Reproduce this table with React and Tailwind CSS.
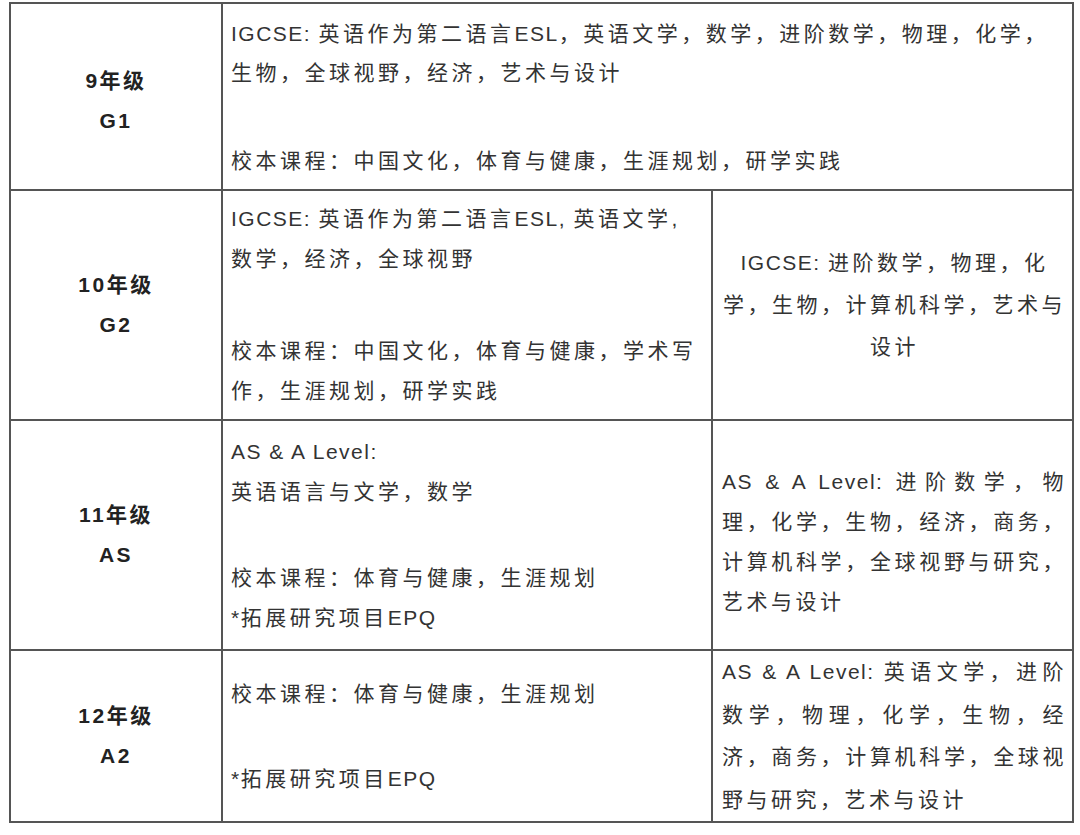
import React from "react";

// Latin runs are set a little tighter than the CJK text around them
function T({ children }) {
  const parts = String(children).split(/([A-Za-z0-9&*:,. ]+)/);
  return parts.map((p, i) =>
    /[A-Za-z0-9&*:,]/.test(p) ? (
      <span key={i} className="tracking-[1.5px]">{p}</span>
    ) : (
      <React.Fragment key={i}>{p}</React.Fragment>
    )
  );
}

function GradeCell({ grade, code, extra = "" }) {
  return (
    <div className={"bg-white flex flex-col items-center justify-center font-bold text-[#222] tracking-[2.5px] leading-[40px] " + extra}>
      <div>{grade}</div>
      <div>{code}</div>
    </div>
  );
}

export default function App() {
  return (
    <div className="w-[1080px] h-[835px] bg-white pt-[2px] pl-[9px] [font-family:'Liberation_Sans','Noto_Sans_CJK_SC',sans-serif] text-[21px] tracking-[3.5px] text-[#333]">
      <div className="grid grid-cols-[210px_488px_359px] grid-rows-[185px_228px_228px_170px] gap-[2px] p-[2px] bg-[#555] w-[1065px]">
        {/* row 1 */}
        <GradeCell grade="9年级" code="G1" extra="pt-[8px]" />
        <div className="col-span-2 bg-white flex flex-col justify-center pl-[8px] pr-[6px] leading-[39px]">
          <p><T>IGCSE: 英语作为第二语言ESL，英语文学，数学，进阶数学，物理，化学，生物，全球视野，经济，艺术与设计</T></p>
          <p className="mt-[49px]">校本课程：中国文化，体育与健康，生涯规划，研学实践</p>
        </div>

        {/* row 2 */}
        <GradeCell grade="10年级" code="G2" />
        <div className="bg-white flex flex-col justify-center pl-[8px] pr-[6px] leading-[40px]">
          <p><T>IGCSE: 英语作为第二语言ESL, 英语文学, 数学，经济，全球视野</T></p>
          <p className="mt-[52px]">校本课程：中国文化，体育与健康，学术写作，生涯规划，研学实践</p>
        </div>
        <div className="bg-white flex flex-col justify-center text-center pl-[9px] pr-[5px] leading-[42px]">
          <p><T>IGCSE: 进阶数学，物理，化学，生物，计算机科学，艺术与设计</T></p>
        </div>

        {/* row 3 */}
        <GradeCell grade="11年级" code="AS" />
        <div className="bg-white flex flex-col justify-center pl-[8px] pr-[6px] leading-[40px]">
          <p><T>AS & A Level:</T></p>
          <p>英语语言与文学，数学</p>
          <p className="mt-[46px]">校本课程：体育与健康，生涯规划</p>
          <p><T>*拓展研究项目EPQ</T></p>
        </div>
        <div className="bg-white flex flex-col justify-center pl-[9px] pr-[5px] pt-[14px] leading-[40px] text-justify">
          <p><T>AS & A Level: 进阶数学，物理，化学，生物，经济，商务，计算机科学，全球视野与研究，艺术与设计</T></p>
        </div>

        {/* row 4 */}
        <GradeCell grade="12年级" code="A2" />
        <div className="bg-white flex flex-col justify-center pl-[8px] pr-[6px] leading-[40px]">
          <p>校本课程：体育与健康，生涯规划</p>
          <p className="mt-[45px]"><T>*拓展研究项目EPQ</T></p>
        </div>
        <div className="bg-white flex flex-col justify-center pl-[9px] pr-[5px] leading-[42.5px] text-justify">
          <p><T>AS & A Level: 英语文学，进阶数学，物理，化学，生物，经济，商务，计算机科学，全球视野与研究，艺术与设计</T></p>
        </div>
      </div>
    </div>
  );
}
